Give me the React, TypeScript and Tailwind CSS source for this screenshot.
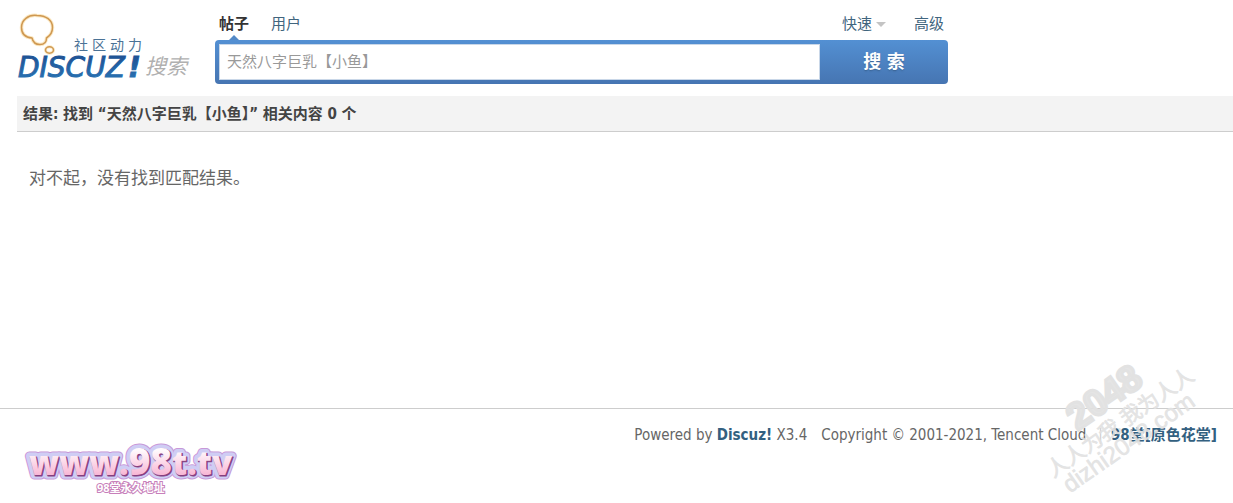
import React, { useState } from "react";

const KEYWORD = "天然八字巨乳【小鱼】";

const BUBBLE =
  "M37 15.500c-9-1-15.500 4.500-15.500 12 0 6.500 4 10 10.500 10.500 1 4.500 4 6.500 8 6.500s6.500-2.500 6.500-6.500c4-2.500 6-5.500 6-10.500C52.500 20 46 15.500 37 15.500Z";

function Logo() {
  return (
    <a href="#" aria-label="Discuz! 搜索" className="block w-[198px] shrink-0">
      <svg viewBox="17 0 198 84" className="block w-full">
        <defs>
          <linearGradient id="word" x1="0" y1="0" x2="0" y2="1">
            <stop offset="0" stopColor="#1d4c8f" />
            <stop offset="1" stopColor="#2a78b8" />
          </linearGradient>
        </defs>
        {/* thought bubble */}
        <g fill="none" strokeLinejoin="round">
          <path d={BUBBLE} stroke="#fbe9c4" strokeWidth="3.500" />
          <path d={BUBBLE} stroke="#cf9852" strokeWidth="1.500" />
          <ellipse cx="49.500" cy="50" rx="4" ry="3.200" stroke="#fbe9c4" strokeWidth="3" />
          <ellipse cx="49.500" cy="50" rx="4" ry="3.200" stroke="#cf9852" strokeWidth="1.500" />
        </g>
        <text
          y="50"
          fontSize="14"
          fill="#4a7296"
          className="font-['Noto_Sans_CJK_SC',sans-serif]"
        >
          <tspan x="74">社</tspan>
          <tspan x="92">区</tspan>
          <tspan x="110">动</tspan>
          <tspan x="128">力</tspan>
        </text>
        <text
          x="18"
          y="77"
          fontSize="28"
          fontStyle="italic"
          fill="url(#word)"
          stroke="url(#word)"
          className="font-['DejaVu_Sans',sans-serif]"
        >
          DISCUZ
          <tspan x="128" fontWeight="700">
            !
          </tspan>
        </text>
        <text
          x="145"
          y="74"
          fontSize="21"
          fontStyle="italic"
          fill="#b0b0b0"
          className="font-['Noto_Sans_CJK_SC',sans-serif]"
        >
          搜索
        </text>
      </svg>
    </a>
  );
}

function SearchForm() {
  const [query, setQuery] = useState(KEYWORD);

  return (
    <form
      className="w-[733px] max-w-full pt-3"
      onSubmit={(e) => e.preventDefault()}
    >
      <div className="flex justify-between h-7 px-1 text-[15px] leading-6 text-[#41657e]">
        <div className="flex gap-[22px]">
          <a href="#" className="relative font-bold text-[#333]">
            帖子
            <span className="absolute left-1/2 bottom-0 -translate-x-1/2 border-x-5 border-b-5 border-x-transparent border-b-[#5389c6]" />
          </a>
          <a href="#">用户</a>
        </div>
        <div className="flex gap-7">
          <a href="#" className="flex items-center h-6 gap-1">
            快速
            <span className="border-x-5 border-t-5 border-x-transparent border-t-[#c4c4c4]" />
          </a>
          <a href="#">高级</a>
        </div>
      </div>
      <div className="flex h-11 rounded-sm bg-linear-to-b from-[#5390d3] to-[#4675b2] p-1 pr-0">
        <input
          type="text"
          aria-label="搜索"
          value={query}
          onChange={(e) => setQuery(e.target.value)}
          className="flex-1 min-w-0 bg-white border border-[#c9d7e8] px-[7px] text-[15px] text-[#999] outline-none"
        />
        <button
          type="submit"
          className="w-32 text-lg leading-6 font-bold text-white text-shadow-sm cursor-pointer"
        >
          搜 索
        </button>
      </div>
    </form>
  );
}

function SiteBadge() {
  return (
    <svg
      viewBox="0 0 220 60"
      className="block w-[220px] h-[60px] shrink-0 font-['Open_Sans','Noto_Sans_CJK_SC',sans-serif]"
    >
      <defs>
        <linearGradient id="candy" x1="0" y1="0" x2="0" y2="1">
          <stop offset="0.300" stopColor="#fffafd" />
          <stop offset="0.900" stopColor="#f6a6cb" />
        </linearGradient>
        <g id="address">
          <text fontSize="33" fontWeight="800" strokeLinejoin="round">
            www.<tspan fontSize="37">98</tspan>t.tv
          </text>
        </g>
      </defs>
      <use href="#address" x="9" y="34" fill="#c898d8" stroke="#c898d8" strokeWidth="9" />
      <use href="#address" x="9" y="34" fill="#cfcdf4" stroke="#cfcdf4" strokeWidth="7" />
      <use href="#address" x="10" y="35" fill="#7d3a78" stroke="#8a4384" strokeWidth="1" />
      <use href="#address" x="9" y="34" fill="url(#candy)" />
      <text
        x="77"
        y="51"
        fontSize="11"
        fontWeight="700"
        fill="#fff"
        stroke="#c77fba"
        strokeWidth="2"
        paintOrder="stroke"
      >
        98堂永久地址
      </text>
    </svg>
  );
}

function Watermark() {
  return (
    <svg
      viewBox="0 0 213 148"
      className="absolute right-0 bottom-0 w-[213px] h-[148px] pointer-events-none font-['Liberation_Sans','Noto_Sans_CJK_SC',sans-serif]"
      fill="#e2e2e2"
      fillOpacity="0.900"
    >
      <g transform="translate(47 143) rotate(-35)">
        <text x="5" y="-2" fontSize="24" stroke="#e2e2e2" strokeWidth="0.600">
          dizhi2048.com
        </text>
        <text
          x="0"
          y="-24"
          fontSize="21"
          stroke="#e2e2e2"
          strokeWidth="0.600"
        >
          人人为我 我为人人
        </text>
        <text
          x="47"
          y="-49"
          fontSize="37"
          fontWeight="700"
          stroke="#e2e2e2"
          strokeWidth="3"
        >
          2048
        </text>
      </g>
    </svg>
  );
}

export default function App() {
  return (
    <div className="relative flex flex-col min-h-screen overflow-hidden bg-white text-[#666] font-['DejaVu_Sans_Condensed','Noto_Sans_CJK_SC',sans-serif]">
      <header className="flex pl-[17px]">
        <Logo />
        <SearchForm />
      </header>

      <main className="flex-1 pl-[17px] pt-3">
        <h1 className="h-9 px-[6px] border-b border-[#cdcdcd] bg-[#f3f3f3] text-[15px] leading-9 font-bold text-[#444]">
          结果: 找到 “{KEYWORD}” 相关内容 0 个
        </h1>
        <p className="px-3 py-8 text-[17px] leading-7">
          对不起，没有找到匹配结果。
        </p>
      </main>

      <footer className="flex justify-between h-[95px] border-t border-[#cdcdcd] pl-5 pr-4">
        <div className="pt-8">
          <SiteBadge />
        </div>
        <p className="flex pt-[14px] text-[15px] leading-6 whitespace-pre">
          <span>
            Powered by{" "}
            <a href="#" className="font-bold text-[#336080]">
              Discuz!
            </a>{" "}
            X3.4
          </span>
          <span className="pl-[14px]">
            Copyright © 2001-2021, Tencent Cloud
          </span>
          <span className="pl-3 pr-2 text-[#ccc]">|</span>
          <a href="#" className="font-bold text-[#336080]">
            98堂[原色花堂]
          </a>
        </p>
      </footer>

      <Watermark />
    </div>
  );
}
